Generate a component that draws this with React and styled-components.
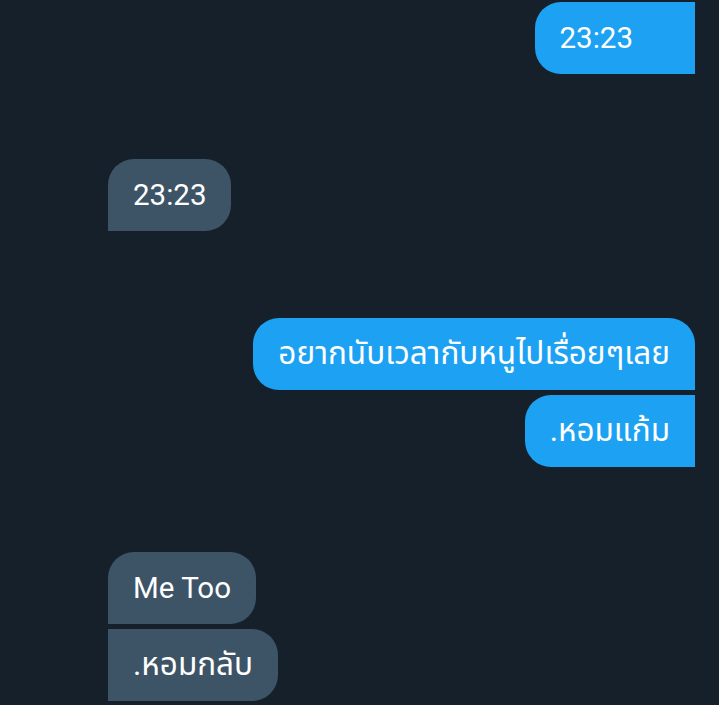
import styled, { createGlobalStyle } from "styled-components";

const Global = createGlobalStyle`
  html, body {
    margin: 0;
    padding: 0;
    background: #16202b;
  }
  body {
    font-family: Roboto, "Noto Sans", "Noto Sans Thai", "DejaVu Sans", sans-serif;
    -webkit-font-smoothing: antialiased;
  }
`;

const Screen = styled.div`
  width: 719px;
  height: 705px;
  overflow: hidden;
  background: #16202b;
  box-sizing: border-box;
  padding: 2px 24px 0 108px;
  display: flex;
  flex-direction: column;
`;

const Group = styled.div`
  display: flex;
  flex-direction: column;
  gap: 5px;
  align-items: ${(p) => (p.$mine ? "flex-end" : "flex-start")};
  margin-top: ${(p) => p.$space || 0}px;
`;

const R = 26;

const Bubble = styled.div`
  box-sizing: border-box;
  height: 72px;
  display: flex;
  align-items: center;
  padding: 0 ${(p) => p.$padRight || 25}px 0 25px;
  font-size: ${(p) => (p.$thai ? 31.5 : 29.5)}px;
  line-height: 36px;
  color: #ffffff;
  white-space: nowrap;
  background: ${(p) => (p.$mine ? "#1da1f2" : "#3d5466")};
  border-radius: ${(p) => p.$corners.map((c) => (c ? R : 0) + "px").join(" ")};
`;

export default function App() {
  return (
    <>
      <Global />
      <Screen>
        <Group $mine>
          <Bubble $mine $corners={[1, 0, 0, 1]} $padRight={62}>
            23:23
          </Bubble>
        </Group>

        <Group $space={85}>
          <Bubble $corners={[1, 1, 1, 0]}>23:23</Bubble>
        </Group>

        <Group $mine $space={87}>
          <Bubble $mine $thai $corners={[1, 1, 0, 1]}>
            อยากนับเวลากับหนูไปเรื่อยๆเลย
          </Bubble>
          <Bubble $mine $thai $corners={[1, 0, 0, 1]}>
            .หอมแก้ม
          </Bubble>
        </Group>

        <Group $space={85}>
          <Bubble $corners={[1, 1, 1, 0]}>Me Too</Bubble>
          <Bubble $thai $corners={[0, 1, 1, 0]}>.หอมกลับ</Bubble>
        </Group>
      </Screen>
    </>
  );
}
